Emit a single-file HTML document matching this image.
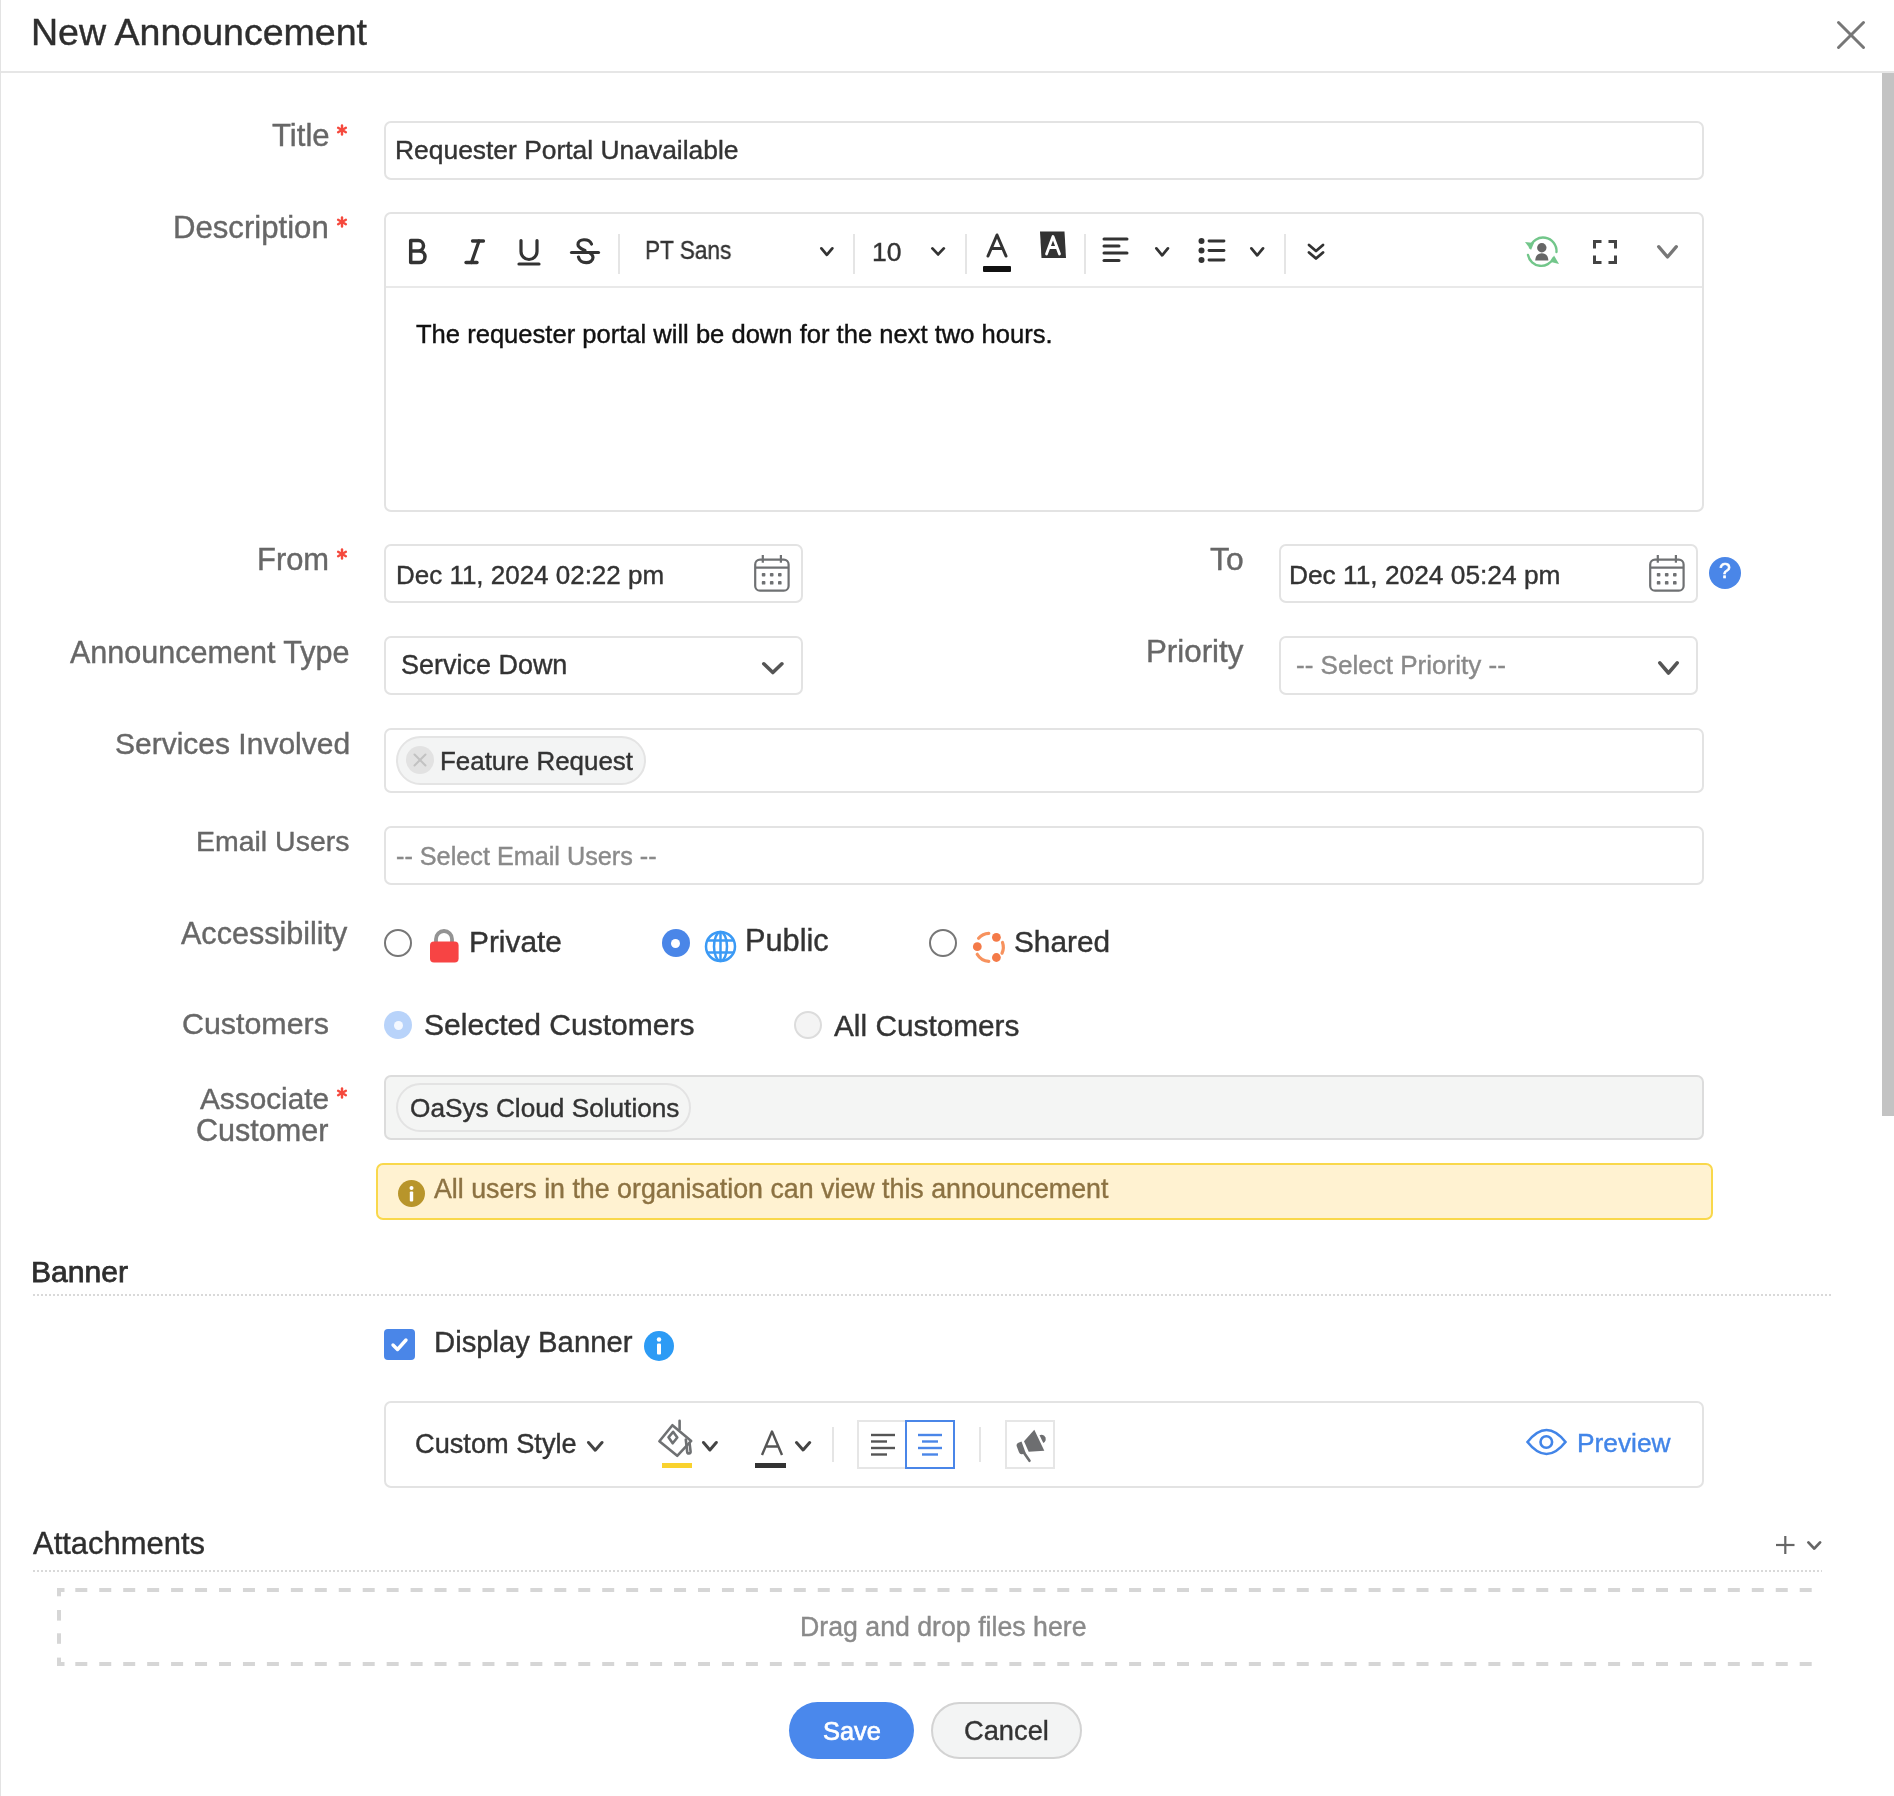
<!DOCTYPE html>
<html><head><meta charset="utf-8"><title>New Announcement</title>
<style>
html,body{margin:0;padding:0;background:#fff;width:1894px;height:1796px;overflow:hidden;position:relative;}
.t{position:absolute;white-space:nowrap;will-change:transform;font-family:"Liberation Sans",sans-serif;}
.b{position:absolute;display:block;}
</style></head><body>
<div class="b" style="left:0px;top:0px;width:1px;height:1796px;background:#e3e3e3;"></div>
<div class="b" style="left:1px;top:71px;width:1893px;height:2px;background:#e6e6e6;"></div>
<div class="b" style="left:1882px;top:73px;width:12px;height:1043px;background:#c3c3c3;"></div>
<div class="t" style="left:31.23px;top:8.28px;font-size:37.569px;line-height:49px;color:#2e2e2e;-webkit-text-stroke:0.4px #2e2e2e;">New Announcement</div>
<svg class="b" style="left:1836px;top:20px" width="30" height="30" viewBox="0 0 30 30"><g stroke="#777" stroke-width="3" stroke-linecap="round"><line x1="2.5" y1="2.5" x2="27.5" y2="27.5"/><line x1="27.5" y1="2.5" x2="2.5" y2="27.5"/></g></svg>
<div class="t" style="left:271.95px;top:115.61px;font-size:31.140px;line-height:40px;color:#676767;-webkit-text-stroke:0.4px #676767;">Title</div>
<svg class="b" style="left:335.5px;top:123.5px" width="12" height="12" viewBox="0 0 12 12"><g stroke="#f5493d" stroke-width="2.4" stroke-linecap="round"><line x1="6" y1="1.5" x2="6" y2="10.5"/><line x1="2.1" y1="3.75" x2="9.9" y2="8.25"/><line x1="2.1" y1="8.25" x2="9.9" y2="3.75"/></g></svg>
<div class="b" style="left:384px;top:121px;width:1320px;height:59px;border:2px solid #e3e3e3;border-radius:7px;box-sizing:border-box;background:#fff;"></div>
<div class="t" style="left:395.08px;top:133.35px;font-size:26.420px;line-height:34px;color:#333;-webkit-text-stroke:0.4px #333;">Requester Portal Unavailable</div>
<div class="t" style="left:173.29px;top:207.51px;font-size:31.134px;line-height:40px;color:#676767;-webkit-text-stroke:0.4px #676767;">Description</div>
<svg class="b" style="left:335.5px;top:215.5px" width="12" height="12" viewBox="0 0 12 12"><g stroke="#f5493d" stroke-width="2.4" stroke-linecap="round"><line x1="6" y1="1.5" x2="6" y2="10.5"/><line x1="2.1" y1="3.75" x2="9.9" y2="8.25"/><line x1="2.1" y1="8.25" x2="9.9" y2="3.75"/></g></svg>
<div class="b" style="left:384px;top:212px;width:1320px;height:300px;border:2px solid #e3e3e3;border-radius:7px;box-sizing:border-box;background:#fff;"></div>
<div class="b" style="left:386px;top:286px;width:1316px;height:2px;background:#e9e9e9;"></div>
<svg class="b" style="left:406px;top:236px" width="24" height="31" viewBox="0 0 24 31"><path d="M4.7,4.6 H12.3 a5.2,5.2 0 0 1 0,10.4 H4.7 Z M4.7,15 H13.2 a5.8,5.8 0 0 1 0,11.6 H4.7 Z" fill="none" stroke="#333" stroke-width="3.5" stroke-linejoin="round"/></svg>
<svg class="b" style="left:462px;top:236px" width="26" height="31" viewBox="0 0 26 31"><g stroke="#333" stroke-width="3.3" stroke-linecap="round" fill="none"><line x1="10.5" y1="5" x2="21.5" y2="5"/><line x1="4" y1="26.5" x2="15" y2="26.5"/><line x1="17" y1="5" x2="9.5" y2="26.5"/></g></svg>
<svg class="b" style="left:515px;top:236px" width="28" height="32" viewBox="0 0 28 32"><g stroke="#333" stroke-width="3.2" stroke-linecap="round" fill="none"><path d="M6,4.5 V15.5 a8,8 0 0 0 16,0 V4.5"/><line x1="4" y1="28" x2="24" y2="28"/></g></svg>
<svg class="b" style="left:568px;top:236px" width="34" height="32" viewBox="0 0 34 32"><g stroke="#333" stroke-width="3.2" stroke-linecap="round" fill="none"><path d="M23.5,8 C21,2 10,2.5 10,8.5 C10,12 14,13 17,14.5"/><path d="M10.5,21 C11.5,28.5 25,28.5 25,21.5 C25,19.5 24,18.5 22.5,17.5"/><line x1="3.5" y1="16.5" x2="30.5" y2="16.5"/></g></svg>
<div class="b" style="left:618px;top:234px;width:2px;height:40px;background:#e5e5e5;"></div>
<div class="t" style="left:645.19px;top:232.59px;font-size:26.000px;line-height:34px;color:#333;-webkit-text-stroke:0.4px #333;transform:scaleX(0.8698);transform-origin:0 0;">PT Sans</div>
<svg class="b" style="left:818.5px;top:246.2px" width="15.700000000000045" height="11.199999999999989" viewBox="0 0 15.700000000000045 11.199999999999989"><polyline points="2.40,2.40 7.85,8.80 13.30,2.40" fill="none" stroke="#333" stroke-width="2.8" stroke-linecap="round" stroke-linejoin="round"/></svg>
<div class="b" style="left:853px;top:234px;width:2px;height:40px;background:#e5e5e5;"></div>
<div class="t" style="left:872.16px;top:234.51px;font-size:26.517px;line-height:34px;color:#333;-webkit-text-stroke:0.4px #333;">10</div>
<svg class="b" style="left:930.3px;top:246.4px" width="16.200000000000045" height="10.799999999999983" viewBox="0 0 16.200000000000045 10.799999999999983"><polyline points="2.40,2.40 8.10,8.40 13.80,2.40" fill="none" stroke="#333" stroke-width="2.8" stroke-linecap="round" stroke-linejoin="round"/></svg>
<div class="b" style="left:965px;top:234px;width:2px;height:40px;background:#e5e5e5;"></div>
<svg class="b" style="left:984px;top:232px" width="26" height="26" viewBox="0 0 26 26"><path d="M4,24 L13,3 L22,24 M7.5,16.5 H18.5" fill="none" stroke="#333" stroke-width="3" stroke-linecap="round" stroke-linejoin="round"/></svg>
<div class="b" style="left:983px;top:266px;width:28px;height:6px;background:#111;border-radius:1px;"></div>
<svg class="b" style="left:1038px;top:230px" width="30" height="30" viewBox="0 0 30 30"><path d="M2,1.5 H26.5 L28,28 H3.5 Z" fill="#333"/><path d="M8.5,24 L15,6.5 L21.5,24 M11,17.5 H19" fill="none" stroke="#fff" stroke-width="2.8" stroke-linecap="round" stroke-linejoin="round"/></svg>
<div class="b" style="left:1084px;top:234px;width:2px;height:40px;background:#e5e5e5;"></div>
<svg class="b" style="left:1102px;top:236px" width="28" height="30" viewBox="0 0 28 30"><g stroke="#333" stroke-width="3" stroke-linecap="round"><line x1="2" y1="3" x2="25" y2="3"/><line x1="2" y1="10" x2="17" y2="10"/><line x1="2" y1="17" x2="25" y2="17"/><line x1="2" y1="24.5" x2="17" y2="24.5"/></g></svg>
<svg class="b" style="left:1153.7px;top:245.5px" width="16.299999999999955" height="11.699999999999989" viewBox="0 0 16.299999999999955 11.699999999999989"><polyline points="2.40,2.40 8.15,9.30 13.90,2.40" fill="none" stroke="#333" stroke-width="2.8" stroke-linecap="round" stroke-linejoin="round"/></svg>
<svg class="b" style="left:1197px;top:236px" width="30" height="30" viewBox="0 0 30 30"><g fill="#333"><circle cx="4.5" cy="5" r="3"/><circle cx="4.5" cy="14.5" r="3"/><circle cx="4.5" cy="24" r="3"/></g><g stroke="#333" stroke-width="2.8" stroke-linecap="round"><line x1="12" y1="5" x2="27" y2="5"/><line x1="12" y1="14.5" x2="27" y2="14.5"/><line x1="12" y1="24" x2="27" y2="24"/></g></svg>
<svg class="b" style="left:1249.4px;top:245.5px" width="16.399999999999864" height="11.699999999999989" viewBox="0 0 16.399999999999864 11.699999999999989"><polyline points="2.40,2.40 8.20,9.30 14.00,2.40" fill="none" stroke="#333" stroke-width="2.8" stroke-linecap="round" stroke-linejoin="round"/></svg>
<div class="b" style="left:1284px;top:234px;width:2px;height:40px;background:#e5e5e5;"></div>
<svg class="b" style="left:1306px;top:242px" width="20" height="20" viewBox="0 0 20 20"><g fill="none" stroke="#333" stroke-width="2.8" stroke-linecap="round" stroke-linejoin="round"><polyline points="3,3 10,9 17,3"/><polyline points="3,10.5 10,16.5 17,10.5"/></g></svg>
<svg class="b" style="left:1522px;top:233px" width="40" height="38" viewBox="0 0 40 38"><g fill="none" stroke="#72c68a" stroke-width="2.4" stroke-linecap="round"><path d="M8,14.5 A13.5,13.5 0 0 1 34.5,19"/><path d="M31.5,25 A13.5,13.5 0 0 1 6,22"/></g><path d="M3,9 L9,17 L12,10 Z" fill="#72c68a"/><path d="M37,31 L32,22.5 L29,29 Z" fill="#72c68a"/><circle cx="19.8" cy="14.8" r="4.7" fill="#666"/><path d="M13.2,27.5 C13.5,22.5 16,20.3 19.8,20.3 C23.6,20.3 26.1,22.5 26.4,27.5 Z" fill="#666"/></svg>
<svg class="b" style="left:1591px;top:238px" width="28" height="28" viewBox="0 0 28 28"><g fill="none" stroke="#444" stroke-width="3" stroke-linecap="square"><polyline points="3.5,9 3.5,3.5 9,3.5"/><polyline points="19,3.5 24.5,3.5 24.5,9"/><polyline points="3.5,19 3.5,24.5 9,24.5"/><polyline points="19,24.5 24.5,24.5 24.5,19"/></g></svg>
<svg class="b" style="left:1655.5px;top:243.8px" width="23.0" height="15.699999999999989" viewBox="0 0 23.0 15.699999999999989"><polyline points="2.65,2.65 11.50,13.05 20.35,2.65" fill="none" stroke="#777" stroke-width="3.3" stroke-linecap="round" stroke-linejoin="round"/></svg>
<div class="t" style="left:415.73px;top:318.24px;font-size:25.575px;line-height:33px;color:#111;-webkit-text-stroke:0.4px #111;">The requester portal will be down for the next two hours.</div>
<div class="t" style="left:257.18px;top:539.98px;font-size:30.928px;line-height:40px;color:#676767;-webkit-text-stroke:0.4px #676767;">From</div>
<svg class="b" style="left:335.5px;top:547.5px" width="12" height="12" viewBox="0 0 12 12"><g stroke="#f5493d" stroke-width="2.4" stroke-linecap="round"><line x1="6" y1="1.5" x2="6" y2="10.5"/><line x1="2.1" y1="3.75" x2="9.9" y2="8.25"/><line x1="2.1" y1="8.25" x2="9.9" y2="3.75"/></g></svg>
<div class="b" style="left:384px;top:544px;width:419px;height:59px;border:2px solid #e3e3e3;border-radius:7px;box-sizing:border-box;background:#fff;"></div>
<div class="t" style="left:395.67px;top:558.20px;font-size:25.975px;line-height:34px;color:#333;-webkit-text-stroke:0.4px #333;">Dec 11, 2024 02:22 pm</div>
<svg class="b" style="left:752.5px;top:553.5px" width="38" height="39" viewBox="0 0 38 39"><g fill="none" stroke="#6f7173" stroke-width="2.2"><rect x="2.2" y="5.6" width="33.4" height="31.1" rx="4.8"/><line x1="2.2" y1="13.7" x2="35.6" y2="13.7"/><line x1="9.8" y1="1" x2="9.8" y2="8.7"/><line x1="27.9" y1="1" x2="27.9" y2="8.7"/></g><g fill="#6f7173"><rect x="8.8" y="18.9" width="3.6" height="3.6" rx=".9"/><rect x="16.9" y="18.9" width="3.6" height="3.6" rx=".9"/><rect x="25.0" y="18.9" width="3.6" height="3.6" rx=".9"/><rect x="8.8" y="27.0" width="3.6" height="3.6" rx=".9"/><rect x="16.9" y="27.0" width="3.6" height="3.6" rx=".9"/><rect x="25.0" y="27.0" width="3.6" height="3.6" rx=".9"/></g></svg>
<div class="t" style="left:1210.35px;top:539.47px;font-size:31.840px;line-height:41px;color:#676767;-webkit-text-stroke:0.4px #676767;">To</div>
<div class="b" style="left:1279px;top:544px;width:419px;height:59px;border:2px solid #e3e3e3;border-radius:7px;box-sizing:border-box;background:#fff;"></div>
<div class="t" style="left:1289.02px;top:558.08px;font-size:26.311px;line-height:34px;color:#333;-webkit-text-stroke:0.4px #333;">Dec 11, 2024 05:24 pm</div>
<svg class="b" style="left:1648px;top:553.5px" width="38" height="39" viewBox="0 0 38 39"><g fill="none" stroke="#6f7173" stroke-width="2.2"><rect x="2.2" y="5.6" width="33.4" height="31.1" rx="4.8"/><line x1="2.2" y1="13.7" x2="35.6" y2="13.7"/><line x1="9.8" y1="1" x2="9.8" y2="8.7"/><line x1="27.9" y1="1" x2="27.9" y2="8.7"/></g><g fill="#6f7173"><rect x="8.8" y="18.9" width="3.6" height="3.6" rx=".9"/><rect x="16.9" y="18.9" width="3.6" height="3.6" rx=".9"/><rect x="25.0" y="18.9" width="3.6" height="3.6" rx=".9"/><rect x="8.8" y="27.0" width="3.6" height="3.6" rx=".9"/><rect x="16.9" y="27.0" width="3.6" height="3.6" rx=".9"/><rect x="25.0" y="27.0" width="3.6" height="3.6" rx=".9"/></g></svg>
<div class="b" style="left:1708.5px;top:556.5px;width:32px;height:32px;background:#4a86e8;border-radius:50%;"></div>
<div class="t" style="left:1718.75px;top:557.31px;font-size:21.331px;line-height:28px;color:#fff;-webkit-text-stroke:0.6px #fff;">?</div>
<div class="t" style="left:69.89px;top:632.01px;font-size:30.549px;line-height:40px;color:#676767;-webkit-text-stroke:0.4px #676767;">Announcement Type</div>
<div class="b" style="left:384px;top:636px;width:419px;height:59px;border:2px solid #e3e3e3;border-radius:7px;box-sizing:border-box;background:#fff;"></div>
<div class="t" style="left:401.30px;top:647.55px;font-size:26.974px;line-height:35px;color:#333;-webkit-text-stroke:0.4px #333;">Service Down</div>
<svg class="b" style="left:761px;top:660.6px" width="23.700000000000045" height="14.299999999999955" viewBox="0 0 23.700000000000045 14.299999999999955"><polyline points="2.80,2.80 11.85,11.50 20.90,2.80" fill="none" stroke="#555" stroke-width="3.6" stroke-linecap="round" stroke-linejoin="round"/></svg>
<div class="t" style="left:1145.72px;top:631.25px;font-size:31.319px;line-height:41px;color:#676767;-webkit-text-stroke:0.4px #676767;">Priority</div>
<div class="b" style="left:1279px;top:636px;width:419px;height:59px;border:2px solid #e3e3e3;border-radius:7px;box-sizing:border-box;background:#fff;"></div>
<div class="t" style="left:1295.72px;top:648.37px;font-size:26.064px;line-height:34px;color:#8a8a8a;-webkit-text-stroke:0.4px #8a8a8a;">-- Select Priority --</div>
<svg class="b" style="left:1656.6px;top:659.5px" width="23.0" height="15.799999999999955" viewBox="0 0 23.0 15.799999999999955"><polyline points="2.80,2.80 11.50,13.00 20.20,2.80" fill="none" stroke="#555" stroke-width="3.6" stroke-linecap="round" stroke-linejoin="round"/></svg>
<div class="t" style="left:115.11px;top:724.11px;font-size:30.000px;line-height:39px;color:#676767;-webkit-text-stroke:0.4px #676767;">Services Involved</div>
<div class="b" style="left:384px;top:728px;width:1320px;height:65px;border:2px solid #e3e3e3;border-radius:7px;box-sizing:border-box;background:#fff;"></div>
<div class="b" style="left:396px;top:736px;width:250px;height:49px;background:#f3f4f4;border:2px solid #e4e4e4;border-radius:25px;box-sizing:border-box;"></div>
<div class="b" style="left:406px;top:745.7px;width:28px;height:28px;background:#e2e2e2;border-radius:50%;"></div>
<svg class="b" style="left:406px;top:745.7px" width="28" height="28" viewBox="0 0 28 28"><g stroke="#c2c2c2" stroke-width="2" stroke-linecap="round"><line x1="8.5" y1="8.5" x2="19.5" y2="19.5"/><line x1="19.5" y1="8.5" x2="8.5" y2="19.5"/></g></svg>
<div class="t" style="left:440.35px;top:743.82px;font-size:25.925px;line-height:34px;color:#333;-webkit-text-stroke:0.4px #333;">Feature Request</div>
<div class="t" style="left:195.76px;top:822.63px;font-size:28.488px;line-height:37px;color:#676767;-webkit-text-stroke:0.4px #676767;">Email Users</div>
<div class="b" style="left:384px;top:826px;width:1320px;height:59px;border:2px solid #e3e3e3;border-radius:7px;box-sizing:border-box;background:#fff;"></div>
<div class="t" style="left:396.02px;top:839.76px;font-size:25.227px;line-height:33px;color:#8a8a8a;-webkit-text-stroke:0.4px #8a8a8a;">-- Select Email Users --</div>
<div class="t" style="left:181.15px;top:912.81px;font-size:30.564px;line-height:40px;color:#676767;-webkit-text-stroke:0.4px #676767;">Accessibility</div>
<div class="b" style="left:384px;top:929.3px;width:28px;height:28px;border:2px solid #777;border-radius:50%;box-sizing:border-box;background:#fff;"></div>
<svg class="b" style="left:428px;top:928px" width="32" height="36" viewBox="0 0 32 36"><path d="M8,15 V11 a8,8 0 0 1 16,0 V15" fill="none" stroke="#939393" stroke-width="3.8"/><rect x="2" y="13.4" width="28.6" height="21" rx="4" fill="#f74444"/></svg>
<div class="t" style="left:468.67px;top:921.95px;font-size:29.862px;line-height:39px;color:#333;-webkit-text-stroke:0.4px #333;">Private</div>
<div class="b" style="left:661.5px;top:929px;width:28px;height:28px;background:#4a86e8;border-radius:50%;"></div>
<div class="b" style="left:671.0px;top:938.5px;width:9px;height:9px;background:#fff;border-radius:50%;"></div>
<svg class="b" style="left:704px;top:930px" width="33" height="33" viewBox="0 0 33 33"><g fill="none" stroke="#3b9af5" stroke-width="2.5"><circle cx="16.5" cy="16.5" r="14.5"/><ellipse cx="16.5" cy="16.5" rx="6.5" ry="14.5"/><line x1="3.5" y1="10.5" x2="29.5" y2="10.5"/><line x1="3.5" y1="22.5" x2="29.5" y2="22.5"/><line x1="16.5" y1="2" x2="16.5" y2="31"/></g></svg>
<div class="t" style="left:745.34px;top:921.15px;font-size:30.741px;line-height:40px;color:#333;-webkit-text-stroke:0.4px #333;">Public</div>
<div class="b" style="left:929px;top:929.3px;width:28px;height:28px;border:2px solid #777;border-radius:50%;box-sizing:border-box;background:#fff;"></div>
<svg class="b" style="left:968px;top:925px" width="42" height="42" viewBox="0 0 42 42"><g fill="#f47a48"><circle cx="9.3" cy="21.7" r="4.4"/><circle cx="28.4" cy="12.3" r="4.4"/><circle cx="28.4" cy="32.5" r="4.4"/></g><g fill="none" stroke="#f7925e" stroke-width="3.2" stroke-linecap="round"><path d="M10.6,13.3 A14,14 0 0 1 20.8,8.3"/><path d="M34.5,17.5 A14,14 0 0 1 34,28.2"/><path d="M20.8,36.3 A14,14 0 0 1 9.2,29.3"/></g></svg>
<div class="t" style="left:1013.99px;top:921.77px;font-size:29.800px;line-height:39px;color:#333;-webkit-text-stroke:0.4px #333;">Shared</div>
<div class="t" style="left:182.45px;top:1003.87px;font-size:30.383px;line-height:39px;color:#676767;-webkit-text-stroke:0.4px #676767;">Customers</div>
<div class="b" style="left:384px;top:1011.3px;width:28px;height:28px;background:#b8d3fa;border-radius:50%;"></div>
<div class="b" style="left:393.5px;top:1020.8px;width:9px;height:9px;background:#f4f8ff;border-radius:50%;"></div>
<div class="t" style="left:423.61px;top:1005.08px;font-size:30.068px;line-height:39px;color:#333;-webkit-text-stroke:0.4px #333;">Selected Customers</div>
<div class="b" style="left:794.4px;top:1011px;width:28px;height:28px;border:2px solid #dcdcdc;border-radius:50%;box-sizing:border-box;background:#f4f4f4;"></div>
<div class="t" style="left:834.21px;top:1005.87px;font-size:29.801px;line-height:39px;color:#333;-webkit-text-stroke:0.4px #333;">All Customers</div>
<div class="t" style="left:200.21px;top:1079.18px;font-size:29.793px;line-height:39px;color:#676767;-webkit-text-stroke:0.4px #676767;">Associate</div>
<svg class="b" style="left:335.5px;top:1086.5px" width="12" height="12" viewBox="0 0 12 12"><g stroke="#f5493d" stroke-width="2.4" stroke-linecap="round"><line x1="6" y1="1.5" x2="6" y2="10.5"/><line x1="2.1" y1="3.75" x2="9.9" y2="8.25"/><line x1="2.1" y1="8.25" x2="9.9" y2="3.75"/></g></svg>
<div class="t" style="left:196.05px;top:1110.41px;font-size:30.563px;line-height:40px;color:#676767;-webkit-text-stroke:0.4px #676767;">Customer</div>
<div class="b" style="left:384px;top:1075px;width:1320px;height:65px;border:2px solid #dcdcdc;border-radius:7px;box-sizing:border-box;background:#f4f5f4;"></div>
<div class="b" style="left:396px;top:1083px;width:295px;height:49px;background:#f4f5f4;border:2px solid #e3e3e3;border-radius:25px;box-sizing:border-box;"></div>
<div class="t" style="left:409.78px;top:1091.22px;font-size:26.213px;line-height:34px;color:#333;-webkit-text-stroke:0.4px #333;">OaSys Cloud Solutions</div>
<div class="b" style="left:376px;top:1163px;width:1337px;height:57px;background:#fff2d1;border:2.5px solid #f9d84b;border-radius:7px;box-sizing:border-box;"></div>
<div class="b" style="left:397.5px;top:1179.5px;width:27px;height:27px;background:#b8952b;border-radius:50%;"></div>
<svg class="b" style="left:397.5px;top:1179.5px" width="27" height="27" viewBox="0 0 27 27"><g fill="#fff"><circle cx="13.5" cy="8" r="2"/><rect x="11.8" y="11.5" width="3.4" height="10" rx="1"/></g></svg>
<div class="t" style="left:434.30px;top:1172.21px;font-size:26.798px;line-height:35px;color:#8c7242;-webkit-text-stroke:0.4px #8c7242;">All users in the organisation can view this announcement</div>
<div class="t" style="left:30.94px;top:1252.36px;font-size:30.124px;line-height:39px;color:#2e2e2e;-webkit-text-stroke:0.75px #2e2e2e;">Banner</div>
<div class="b" style="left:33px;top:1294px;width:1798px;height:2px;background-image:linear-gradient(to right,#d9d9d9 50%,transparent 50%);background-size:4px 2px;"></div>
<div class="b" style="left:384px;top:1329px;width:31px;height:31px;background:#4a86e8;border-radius:4px;"></div>
<svg class="b" style="left:384px;top:1329px" width="31" height="31" viewBox="0 0 31 31"><polyline points="9,16 13.5,20.5 22,11" fill="none" stroke="#fff" stroke-width="3.4" stroke-linecap="round" stroke-linejoin="round"/></svg>
<div class="t" style="left:434.41px;top:1323.15px;font-size:29.283px;line-height:38px;color:#333;-webkit-text-stroke:0.4px #333;">Display Banner</div>
<div class="b" style="left:644px;top:1330.5px;width:30px;height:30px;background:#2c9bf5;border-radius:50%;"></div>
<svg class="b" style="left:644px;top:1330.5px" width="30" height="30" viewBox="0 0 30 30"><g fill="#fff"><circle cx="15" cy="8.5" r="2.2"/><rect x="13" y="12.5" width="4" height="11" rx="1"/></g></svg>
<div class="b" style="left:384px;top:1401px;width:1320px;height:87px;border:2px solid #e3e3e3;border-radius:7px;box-sizing:border-box;background:#fff;"></div>
<div class="t" style="left:415.32px;top:1425.87px;font-size:27.202px;line-height:35px;color:#333;-webkit-text-stroke:0.4px #333;">Custom Style</div>
<svg class="b" style="left:586px;top:1439.7px" width="18.5" height="12.700000000000045" viewBox="0 0 18.5 12.700000000000045"><polyline points="2.50,2.50 9.25,10.20 16.00,2.50" fill="none" stroke="#444" stroke-width="3" stroke-linecap="round" stroke-linejoin="round"/></svg>
<svg class="b" style="left:656px;top:1418px" width="40" height="40" viewBox="0 0 40 40"><g fill="none" stroke="#6f7173" stroke-width="2.6" stroke-linejoin="round" stroke-linecap="round"><path d="M3.4,23.2 L16.4,7.2 L35.2,22.9 L21.2,37.8 Z"/><path d="M12.5,19.3 L17.1,13.8 L21.3,19.5 L16.7,25.3 Z"/><line x1="23.6" y1="2.7" x2="23.6" y2="11.2"/><path d="M29.8,21.5 L31.2,33.8 a1.7,1.7 0 0 0 3.4,-0.2 L33.6,25.5"/></g></svg>
<div class="b" style="left:662px;top:1463px;width:30px;height:5px;background:#f9d22e;"></div>
<svg class="b" style="left:700.8px;top:1439.7px" width="17.800000000000068" height="12.5" viewBox="0 0 17.800000000000068 12.5"><polyline points="2.50,2.50 8.90,10.00 15.30,2.50" fill="none" stroke="#444" stroke-width="3" stroke-linecap="round" stroke-linejoin="round"/></svg>
<svg class="b" style="left:759px;top:1429px" width="26" height="28" viewBox="0 0 26 28"><path d="M3,26 L13,2.5 L23,26 M6.8,17.5 H19.2" fill="none" stroke="#555" stroke-width="2.4" stroke-linejoin="round"/></svg>
<div class="b" style="left:755px;top:1463px;width:31px;height:5px;background:#333;"></div>
<svg class="b" style="left:793.9px;top:1439.7px" width="18.200000000000045" height="12.5" viewBox="0 0 18.200000000000045 12.5"><polyline points="2.50,2.50 9.10,10.00 15.70,2.50" fill="none" stroke="#444" stroke-width="3" stroke-linecap="round" stroke-linejoin="round"/></svg>
<div class="b" style="left:831.5px;top:1427px;width:2px;height:35px;background:#e5e5e5;"></div>
<div class="b" style="left:857px;top:1420px;width:50px;height:49px;border:2px solid #e6e6e6;box-sizing:border-box;background:#fff;"></div>
<svg class="b" style="left:857px;top:1420px" width="50" height="49" viewBox="0 0 50 49"><g stroke="#555" stroke-width="2.4"><line x1="14" y1="15" x2="38" y2="15"/><line x1="14" y1="21.5" x2="30" y2="21.5"/><line x1="14" y1="28" x2="38" y2="28"/><line x1="14" y1="34.5" x2="30" y2="34.5"/></g></svg>
<div class="b" style="left:905px;top:1420px;width:50px;height:49px;border:2px solid #4a86e8;box-sizing:border-box;background:#fff;"></div>
<svg class="b" style="left:905px;top:1420px" width="50" height="49" viewBox="0 0 50 49"><g stroke="#4a86e8" stroke-width="2.4"><line x1="13" y1="15" x2="37" y2="15"/><line x1="17" y1="21.5" x2="33" y2="21.5"/><line x1="13" y1="28" x2="37" y2="28"/><line x1="17" y1="34.5" x2="33" y2="34.5"/></g></svg>
<div class="b" style="left:979px;top:1427px;width:2px;height:35px;background:#e5e5e5;"></div>
<div class="b" style="left:1005px;top:1420px;width:50px;height:49px;border:2px solid #e6e6e6;box-sizing:border-box;background:#fff;"></div>
<svg class="b" style="left:1000px;top:1415px" width="60" height="60" viewBox="0 0 60 60"><g fill="#6d6e70"><path d="M24,26.3 L34.3,14.7 L44.3,35.7 L28.7,36.7 Z"/><path d="M16.8,31.5 a3,3 0 0 1 1.7,-3.8 L21.5,26.6 L25.6,37.8 L22.8,38.9 a3,3 0 0 1 -3.8,-1.7 Z"/><path d="M24.3,38.2 L29.5,45.8" stroke="#6d6e70" stroke-width="2.6" stroke-linecap="round"/><path d="M39.5,20.3 a4.2,4.2 0 0 1 3.8,7.8 Z"/></g></svg>
<svg class="b" style="left:1525px;top:1427px" width="43" height="30" viewBox="0 0 43 30"><g fill="none" stroke="#4285e8" stroke-width="2.6"><path d="M2.5,15 Q21.5,-9 40.5,15 Q21.5,39 2.5,15 Z"/><circle cx="21.3" cy="15" r="5.8"/></g></svg>
<div class="t" style="left:1577.29px;top:1425.58px;font-size:26.311px;line-height:34px;color:#4285e8;-webkit-text-stroke:0.4px #4285e8;">Preview</div>
<div class="t" style="left:33.14px;top:1523.98px;font-size:30.945px;line-height:40px;color:#2e2e2e;-webkit-text-stroke:0.4px #2e2e2e;">Attachments</div>
<svg class="b" style="left:1775px;top:1535px" width="21" height="20" viewBox="0 0 21 20"><g stroke="#666" stroke-width="2.2"><line x1="10.3" y1="1" x2="10.3" y2="19"/><line x1="1" y1="10" x2="19.5" y2="10"/></g></svg>
<svg class="b" style="left:1806.2px;top:1539.8px" width="16.5" height="11.0" viewBox="0 0 16.5 11.0"><polyline points="2.40,2.40 8.25,8.60 14.10,2.40" fill="none" stroke="#666" stroke-width="2.8" stroke-linecap="round" stroke-linejoin="round"/></svg>
<div class="b" style="left:33px;top:1570px;width:1789px;height:2px;background-image:linear-gradient(to right,#d9d9d9 50%,transparent 50%);background-size:4px 2px;"></div>
<svg class="b" style="left:57px;top:1588px" width="1760" height="78" viewBox="0 0 1760 78"><g fill="#d6d6d6"><rect x="0" y="0" width="7.5" height="4"/><rect x="0" y="0" width="4" height="8.3"/><rect x="0" y="74" width="7.5" height="4"/><rect x="0" y="69.6" width="4" height="8.4"/><rect x="0" y="22" width="4" height="10.6"/><rect x="0" y="45.3" width="4" height="10.5"/></g><g stroke="#d6d6d6" stroke-width="4" stroke-dasharray="12 11.95"><line x1="18.3" y1="2" x2="1755" y2="2"/><line x1="18.3" y1="76" x2="1755" y2="76"/></g></svg>
<div class="t" style="left:799.63px;top:1610.04px;font-size:26.712px;line-height:35px;color:#8a8a8a;-webkit-text-stroke:0.4px #8a8a8a;">Drag and drop files here</div>
<div class="b" style="left:789px;top:1702px;width:125px;height:57px;background:#4a88ec;border-radius:29px;"></div>
<div class="t" style="left:822.78px;top:1714.70px;font-size:25.395px;line-height:33px;color:#fff;-webkit-text-stroke:0.7px #fff;">Save</div>
<div class="b" style="left:931px;top:1702px;width:151px;height:57px;background:#f3f4f4;border:2px solid #d3d3d3;border-radius:29px;box-sizing:border-box;"></div>
<div class="t" style="left:964.02px;top:1713.05px;font-size:27.282px;line-height:35px;color:#333;-webkit-text-stroke:0.4px #333;">Cancel</div>
</body></html>
